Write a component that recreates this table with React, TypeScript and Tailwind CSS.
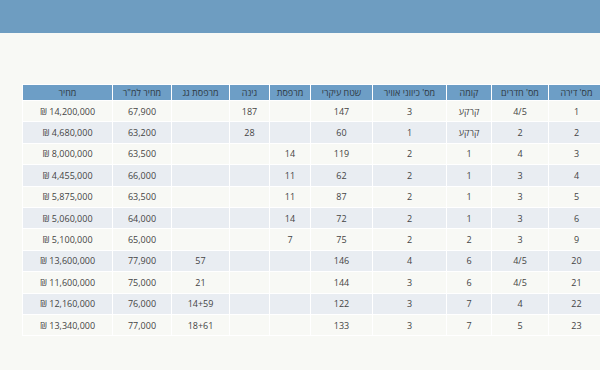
const COLS = [
  { label: "מס' דירה", w: "w-[56px]" },
  { label: "מס' חדרים", w: "w-[57px]" },
  { label: "קומה", w: "w-[45px]" },
  { label: "מס' כיווני אוויר", w: "w-[74px]" },
  { label: "שטח עיקרי", w: "w-[62px]" },
  { label: "מרפסת", w: "w-[41px]" },
  { label: "גינה", w: "w-[40px]" },
  { label: "מרפסת גג", w: "w-[58px]" },
  { label: "מחיר למ\"ר", w: "w-[59px]" },
  { label: "מחיר", w: "w-[90px]" },
];

const ROWS = [
  ["1", "4/5", "קרקע", "3", "147", "", "187", "", "67,900", "14,200,000"],
  ["2", "2", "קרקע", "1", "60", "", "28", "", "63,200", "4,680,000"],
  ["3", "4", "1", "2", "119", "14", "", "", "63,500", "8,000,000"],
  ["4", "3", "1", "2", "62", "11", "", "", "66,000", "4,455,000"],
  ["5", "3", "1", "2", "87", "11", "", "", "63,500", "5,875,000"],
  ["6", "3", "1", "2", "72", "14", "", "", "64,000", "5,060,000"],
  ["9", "3", "2", "2", "75", "7", "", "", "65,000", "5,100,000"],
  ["20", "4/5", "6", "4", "146", "", "", "57", "77,900", "13,600,000"],
  ["21", "4/5", "6", "3", "144", "", "", "21", "75,000", "11,600,000"],
  ["22", "4", "7", "3", "122", "", "", "14+59", "76,000", "12,160,000"],
  ["23", "5", "7", "3", "133", "", "", "18+61", "77,000", "13,340,000"],
];

export default function App() {
  return (
    <div className="w-[600px] h-[370px] overflow-hidden bg-[#f8f9f5] font-['Open_Sans','Noto_Sans',sans-serif]">
      <div className="h-[33px] bg-[#6e9dc1]" />
      <div className="pt-[51px] pl-[22px]">
        <table dir="rtl" className="w-[582px] table-fixed border-collapse text-[9px] text-[#444]">
          <thead>
            <tr className="h-[16px] bg-[#6d9ec6]">
              {COLS.map((c) => (
                <th key={c.label} className={`${c.w} border border-white font-normal text-[#2f3a44] leading-none p-0`}>
                  {c.label}
                </th>
              ))}
            </tr>
          </thead>
          <tbody>
            {ROWS.map((r, i) => (
              <tr key={r[0]} className={`h-[21.4px] ${i % 2 === 1 ? "bg-[#e9edf2]" : "bg-[#f8f9f5]"}`}>
                {r.map((v, j) => (
                  <td key={j} className="border border-white text-center p-0 leading-none">
                    {j === 9 ? (
                      <span dir="ltr">₪ {v}</span>
                    ) : (
                      v
                    )}
                  </td>
                ))}
              </tr>
            ))}
          </tbody>
        </table>
      </div>
    </div>
  );
}
